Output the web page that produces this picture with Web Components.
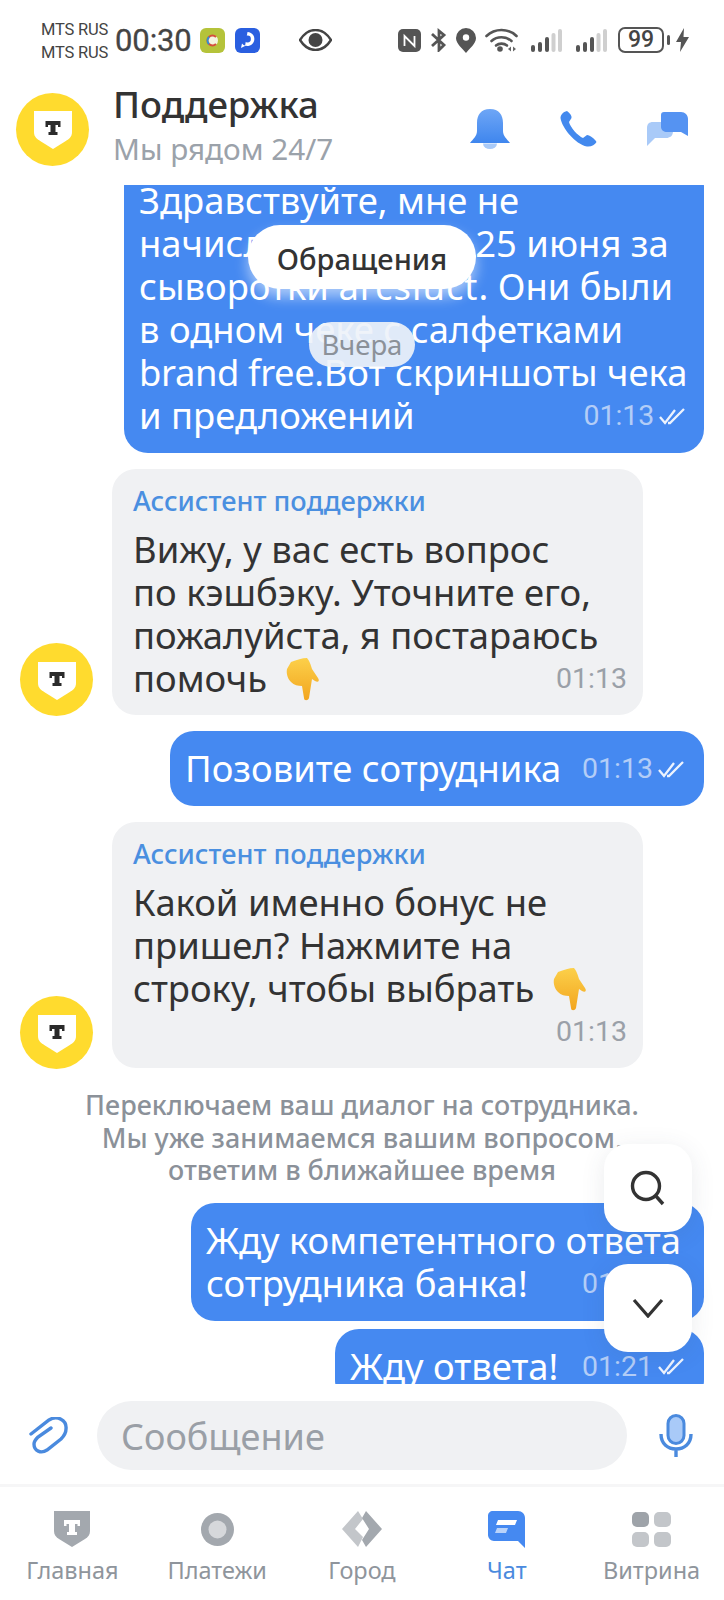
<!DOCTYPE html>
<html lang="ru">
<head>
<meta charset="utf-8">
<title>Поддержка</title>
<style>
  html, body { margin: 0; background: #fff; }
  body { font-family: "Noto Sans", Roboto, sans-serif; color: #333; }
</style>
</head>
<body>
<chat-screen>
  <status-bar slot="status"></status-bar>
  <chat-header slot="header"></chat-header>

  <chat-bubble out style="width:580px;margin-top:-22px" time="01:13">Здравствуйте, мне не<br>начисл<span style="letter-spacing:-.4px">или кэшбэк</span> 25 июня за<br>сыворотки <span style="letter-spacing:1px">arcsluct</span>. Они были<br>в одном чеке с салфетками<br><span style="letter-spacing:-.4px">brand free.</span>Вот скриншоты чека<br>и предложений</chat-bubble>

  <chat-bubble style="width:531px;margin-top:16px" time="01:13" sender="Ассистент поддержки" avatar>Вижу, у вас есть вопрос<br>по кэшбэку. Уточните его,<br>пожалуйста, я постараюсь<br>помочь <hand-emoji></hand-emoji></chat-bubble>

  <chat-bubble out style="width:534px;margin-top:16px" time="01:13">Позовите сотрудника</chat-bubble>

  <chat-bubble style="width:531px;margin-top:16px" time="01:13" sender="Ассистент поддержки" avatar>Какой именно бонус не<br>пришел? Нажмите на<br>строку, чтобы выбрать <hand-emoji></hand-emoji><br>&nbsp;</chat-bubble>

  <system-note>Переключаем ваш диалог на сотрудника.<br>Мы уже занимаемся вашим вопросом,<br>ответим в ближайшее время</system-note>

  <chat-bubble out style="width:513px" time="01:21">Жду компетентного ответа<br>сотрудника банка!</chat-bubble>
  <chat-bubble out style="width:369px;margin-top:8px" time="01:21">Жду ответа!</chat-bubble>

  <chat-overlays slot="over"></chat-overlays>
  <composer-bar slot="composer"></composer-bar>
  <tab-bar slot="tabs"></tab-bar>
</chat-screen>

<script>
class ChatScreen extends HTMLElement {
  constructor() {
    super();
    this.attachShadow({ mode: "open" }).innerHTML = `
      <style>
        :host { display: flex; flex-direction: column; width: 724px; height: 1600px; overflow: hidden; background: #fff; }
        .viewport { position: relative; height: 1199px; flex: none; }
        .scroll { height: 100%; overflow: hidden; display: flex; flex-direction: column; align-items: flex-end; padding-right: 20px; box-sizing: border-box; }
      </style>
      <slot name="status"></slot>
      <slot name="header"></slot>
      <div class="viewport">
        <div class="scroll"><slot></slot></div>
        <slot name="over"></slot>
      </div>
      <slot name="composer"></slot>
      <slot name="tabs"></slot>`;
  }
}

class StatusBar extends HTMLElement {
  constructor() {
    super();
    const bars = `<svg width="31" height="23" viewBox="0 0 31 23">
      <rect x="0" y="16" width="4" height="7" rx="2" fill="#555"/><rect x="7" y="13" width="4" height="10" rx="2" fill="#555"/>
      <rect x="14" y="8" width="4" height="15" rx="2" fill="#555"/><rect x="20.500" y="4" width="4" height="19" rx="2" fill="#cfcfcf"/>
      <rect x="27" y="0" width="4" height="23" rx="2" fill="#cfcfcf"/></svg>`;
    this.attachShadow({ mode: "open" }).innerHTML = `
      <style>
        :host { display: flex; align-items: center; height: 80px; box-sizing: border-box; padding: 0 0 0 41px; color: #444; flex: none; font-family: Roboto, sans-serif; }
        .sim { width: 74px; font-size: 16.500px; line-height: 23px; white-space: nowrap; margin-top: 1px; letter-spacing: -.2px; }
        .clock { width: 85px; font-size: 31px; letter-spacing: -.1px; margin-top: 1px; -webkit-text-stroke: .3px #444; }
        svg { display: block; flex: none; }
        .app { width: 25px; height: 25px; border-radius: 6px; display: grid; place-items: center; margin-right: 10px; }
        .app.lime { background: #b5c33a; }
        .app.blue { background: #2a5fe0; }
        .batt { width: 46px; height: 26px; box-sizing: border-box; border: 2px solid #555; border-radius: 7px; font-size: 23px; font-weight: 500; text-align: center; line-height: 22px; flex: none; }
      </style>
      <div class="sim">MTS RUS<br>MTS RUS</div>
      <div class="clock">00:30</div>
      <div class="app lime"><svg width="15" height="15" viewBox="0 0 15 15"><circle cx="7.500" cy="7.500" r="5.500" fill="#f4f5e0"/><path d="M11 4 A5 5 0 1 0 11 11" fill="none" stroke="#d5503c" stroke-width="2"/><path d="M4 4 A5 5 0 0 0 4 11" fill="none" stroke="#2f8fd8" stroke-width="2"/></svg></div>
      <div class="app blue"><svg width="17" height="18" viewBox="0 0 17 18"><path d="M8.500 1 A7 7 0 1 1 3 12.500 L2 17 L6 15" fill="#fff"/><circle cx="8.500" cy="8" r="3.400" fill="#2a5fe0"/></svg></div>
      <svg style="margin-left:29px" width="33" height="22" viewBox="0 0 33 22"><path d="M1 11 C6 3 11 1 16.500 1 C22 1 27 3 32 11 C27 19 22 21 16.500 21 C11 21 6 19 1 11Z" fill="none" stroke="#444" stroke-width="2.400"/><circle cx="16.500" cy="11" r="7" fill="#444"/></svg>
      <svg style="margin-left:66px" width="23" height="23" viewBox="0 0 23 23"><rect width="23" height="23" rx="5" fill="#555"/><path d="M6.500 17 V7 L16.500 17 V7" fill="none" stroke="#fff" stroke-width="1.800"/></svg>
      <svg style="margin-left:9px" width="17" height="24" viewBox="0 0 17 24"><path d="M2 6 L14 17 L9 22 V3 L14 7 L2 18" fill="none" stroke="#555" stroke-width="2.800"/></svg>
      <svg style="margin-left:9px" width="20" height="25" viewBox="0 0 20 25"><path d="M10 0 A10 10 0 0 1 20 10 C20 16 13 21 10 25 C7 21 0 16 0 10 A10 10 0 0 1 10 0Z" fill="#555"/><circle cx="10" cy="9.500" r="3.200" fill="#fff"/></svg>
      <svg style="margin-left:9px" width="33" height="24" viewBox="0 0 33 24"><g fill="none" stroke="#555" stroke-width="2.600" stroke-linecap="round"><path d="M1.500 8 C10 0 23 0 31.500 8"/><path d="M6.500 13 C12 8 21 8 26.500 13"/><path d="M11 17.500 C14 15 19 15 22 17.500"/></g><circle cx="15" cy="21" r="2.800" fill="#555"/><path d="M23 21 L26 18.500 V23.500Z M28 18.500 L31 21 L28 23.500Z" fill="#666"/></svg>
      <span style="margin-left:13px;display:block">${bars}</span>
      <span style="margin-left:14px;display:block">${bars}</span>
      <div class="batt" style="margin-left:11px">99</div>
      <svg style="margin-left:3px" width="3" height="10" viewBox="0 0 3 10"><rect width="3" height="10" rx="1.500" fill="#555"/></svg>
      <svg style="margin-left:6px" width="13" height="24" viewBox="0 0 13 24"><path d="M8 0 L0 14 H5 L4 24 L13 9 H7.500Z" fill="#555"/></svg>`;
  }
}

class BrandAvatar extends HTMLElement {
  constructor() {
    super();
    this.attachShadow({ mode: "open" }).innerHTML = `
      <style>
        :host { display: grid; place-items: center; width: 73px; height: 73px; border-radius: 50%; background: #ffdb2e; flex: none; }
        svg { display: block; margin-top: 2px; }
      </style>
      <svg width="38" height="38" viewBox="0 0 38 38">
        <path d="M0 0 H38 V21 C38 26 35 28 31 30.500 L19 38 L7 30.500 C3 28 0 26 0 21Z" fill="#fff"/>
        <path d="M11.500 10 H26.500 V16 H24 V14 H21.500 V21 H23.500 V24 H14.500 V21 H16.500 V14 H14 V16 H11.500Z" fill="#2b2b2b"/>
      </svg>`;
  }
}

class ChatHeader extends HTMLElement {
  constructor() {
    super();
    this.attachShadow({ mode: "open" }).innerHTML = `
      <style>
        :host { display: flex; align-items: center; height: 105px; box-sizing: border-box; padding: 0 36px 7px 16px; flex: none; }
        .who { margin: 0 0 9px 24px; flex: 1; }
        .title { font-size: 36.500px; line-height: 42px; font-weight: 500; color: #333; }
        .sub { font-size: 29.700px; line-height: 36px; color: #9ba2aa; margin-top: 6px; }
        svg { display: block; flex: none; }
        .acts { display: flex; align-items: center; }
      </style>
      <brand-avatar></brand-avatar>
      <div class="who"><div class="title">Поддержка</div><div class="sub">Мы рядом 24/7</div></div>
      <div class="acts">
        <svg width="40" height="40" viewBox="0 0 40 40">
          <defs><linearGradient id="b" x1="0" y1="0" x2="0" y2="1"><stop offset="0" stop-color="#6ea6f6"/><stop offset="1" stop-color="#3f86ee"/></linearGradient></defs>
          <path d="M20 0 C29 0 33 6 33 14 V22 C33 27 37 30 40 34 H0 C3 30 7 27 7 22 V14 C7 6 11 0 20 0Z" fill="url(#b)"/>
          <path d="M13 34.500 H27 A7 5.500 0 0 1 13 34.500Z" fill="#a9caf8"/>
        </svg>
        <svg style="margin-left:50px" width="37" height="36" viewBox="0 0 37 36">
          <path d="M7 0 C10 2 12 5 11.500 7 L9 11 C10 16 18 25 23 27 L27 24 C30 24 35 28 36.500 31 C35 34 31 36 27 35.500 C15 33 2 17 0.500 7 C0.500 4 3 1 7 0Z" fill="#4389ee"/>
        </svg>
        <svg style="margin-left:50px" width="41" height="34" viewBox="0 0 41 34">
          <path d="M6 10 H20 C24 10 26 12 26 15 V19 C26 24 23 26 19 26 H8 L0 34 V16 C0 12 2 10 6 10Z" fill="#a9caf8"/>
          <path d="M17 0 H34 C38 0 41 3 41 7 V24 L34 20 H20 C17 20 14 18 14 15 V3 C14 1 15 0 17 0Z" fill="#5593f2"/>
        </svg>
      </div>`;
  }
}

class HandEmoji extends HTMLElement {
  constructor() {
    super();
    this.attachShadow({ mode: "open" }).innerHTML = `
      <style>
        :host { display: inline-block; width: 34px; height: 20px; margin-left: 9px; vertical-align: -3px; position: relative; }
        svg { display: block; position: absolute; left: 0; top: -17px; }
      </style>
      <svg width="34" height="43" viewBox="0 0 34 43">
        <defs><linearGradient id="h" x1="0" y1="0" x2="0" y2="1"><stop offset="0" stop-color="#fcd04a"/><stop offset="1" stop-color="#f2a51f"/></linearGradient></defs>
        <path d="M5 4 C11 2 16 0 21 0 C23 2 25 7 26 11 L32 20 C34 23 32 25 29 23 L26 21 L23 40 C22 43 18 43 18 40 L16 28 C12 28 8 27 5 24 C2 21 0 16 1 11Z" fill="url(#h)"/>
      </svg>`;
  }
}

class ChatBubble extends HTMLElement {
  constructor() {
    super();
    const isOut = this.hasAttribute("out");
    const sender = this.getAttribute("sender");
    const ticks = isOut ? `<svg width="28" height="18" viewBox="0 0 28 18"><path d="M1 10 L6 16 L16 3 M9 16 L11 16 L25 2" fill="none" stroke="#fff" stroke-opacity=".9" stroke-width="2.300"/></svg>` : "";
    this.attachShadow({ mode: "open" }).innerHTML = `
      <style>
        :host { display: block; position: relative; box-sizing: border-box; flex: none; font-size: 36.400px; line-height: 43px; white-space: nowrap; }
        :host(:not([out])) { align-self: flex-start; margin-left: 112px; }
        .box { box-sizing: border-box; width: 100%; border-radius: 24px; }
        :host([out]) .box { background: #4589f1; color: #fff; padding: 16px 18px 16px 15px; }
        :host(:not([out])) .box { background: #f0f1f3; color: #333; padding: 16px 16px 15px 21px; }
        .sender { font-size: 27.200px; line-height: 32px; font-weight: 500; color: #4a8fe0; margin-bottom: 11px; }
        .body { display: grid; }
        .text, .meta { grid-area: 1 / 1; }
        .meta { align-self: end; justify-self: end; display: flex; align-items: center; gap: 5px; font-size: 28.500px; font-family: Roboto, sans-serif; }
        :host([out]) .meta { color: #b3cdf7; }
        :host(:not([out])) .meta { color: #9aa0a8; }
        .ava { position: absolute; left: -92px; bottom: -1px; }
      </style>
      ${this.hasAttribute("avatar") ? `<brand-avatar class="ava"></brand-avatar>` : ""}
      <div class="box">
        ${sender ? `<div class="sender">${sender}</div>` : ""}
        <div class="body">
          <div class="text"><slot></slot></div>
          <div class="meta"><span>${this.getAttribute("time")}</span>${ticks}</div>
        </div>
      </div>`;
  }
}

class SystemNote extends HTMLElement {
  constructor() {
    super();
    this.attachShadow({ mode: "open" }).innerHTML = `
      <style>
        :host { display: block; box-sizing: border-box; width: 704px; margin: 21px 0 16px; text-align: center; font-size: 26.900px; line-height: 32.500px; font-weight: 500; color: #8b9199; flex: none; }
        div { margin-left: 20px; }
      </style>
      <div><slot></slot></div>`;
  }
}

class FloatButton extends HTMLElement {
  constructor() {
    super();
    this.attachShadow({ mode: "open" }).innerHTML = `
      <style>
        :host { display: grid; place-items: center; width: 88px; height: 88px; border-radius: 24px; background: #fff; box-shadow: 0 4px 24px rgba(60,70,90,.10); }
      </style>
      <slot></slot>`;
  }
}

class ChatOverlays extends HTMLElement {
  constructor() {
    super();
    this.attachShadow({ mode: "open" }).innerHTML = `
      <style>
        :host { display: block; }
        .pill { position: absolute; left: 50%; transform: translateX(-50%); display: grid; place-items: center; border-radius: 32px; white-space: nowrap; }
        .topic { top: 40px; left: 362px; width: 228px; height: 64px; box-sizing: border-box; padding-top: 3px; background: #fff; color: #333; font-size: 29px; font-weight: 500; box-shadow: 0 8px 14px rgba(255,255,255,.55); }
        .date { top: 137px; left: 362px; width: 106px; height: 45px; background: rgba(238,242,248,.92); color: #8b9199; font-size: 27.500px; }
        .fabs { position: absolute; right: 32px; }
        svg { display: block; }
      </style>
      <div class="pill topic">Обращения</div>
      <div class="pill date">Вчера</div>
      <float-button class="fabs" style="top:959px">
        <svg width="36" height="36" viewBox="0 0 36 36"><circle cx="16" cy="16" r="13.500" fill="none" stroke="#333" stroke-width="3.400"/><path d="M25 25 L33 34" stroke="#333" stroke-width="3.400" fill="none"/></svg>
      </float-button>
      <float-button class="fabs" style="top:1079px">
        <svg width="32" height="20" viewBox="0 0 32 20"><path d="M2 2 L16 18 L30 2" fill="none" stroke="#333" stroke-width="3.200"/></svg>
      </float-button>`;
  }
}

class ComposerBar extends HTMLElement {
  constructor() {
    super();
    this.attachShadow({ mode: "open" }).innerHTML = `
      <style>
        :host { display: flex; align-items: center; height: 103px; box-sizing: border-box; padding: 17px 29px 14px 29px; border-bottom: 3px solid #f6f6f7; flex: none; }
        .field { width: 530px; height: 69px; margin-left: 29px; border-radius: 35px; background: #f0f1f3; color: #9a9fa6; font-size: 36px; line-height: 72px; padding-left: 24px; box-sizing: border-box; }
        svg { display: block; flex: none; }
      </style>
      <svg width="39" height="37" viewBox="0 0 39 37"><path d="M2 17 L20 3 C28 -2 38 3 37 12 C37 16 35 19 32 22 L18 33 C12 37 5 34 5 27 C5 24 7 22 9 20 L22 11" fill="none" stroke="#4a8ade" stroke-width="3.400" stroke-linecap="round"/></svg>
      <div class="field">Сообщение</div>
      <svg style="margin-left:32px" width="34" height="44" viewBox="0 0 34 44"><rect x="9" y="1.500" width="16" height="28" rx="8" fill="#a9caf8" stroke="#4a8ade" stroke-width="3"/><path d="M2 20 C2 30 9 35 17 35 C25 35 32 30 32 20 M17 35 V43" fill="none" stroke="#4a8ade" stroke-width="3.400"/></svg>`;
  }
}

class TabItem extends HTMLElement {
  constructor() {
    super();
    this.attachShadow({ mode: "open" }).innerHTML = `
      <style>
        :host { display: flex; flex-direction: column; align-items: center; font-size: 23.500px; line-height: 30px; color: #8f959c; white-space: nowrap; }
        :host([active]) { color: #4a8ade; }
        .icon { height: 40px; display: flex; align-items: center; justify-content: center; margin-bottom: 6px; }
      </style>
      <div class="icon"><slot name="icon"></slot></div>
      <slot></slot>`;
  }
}

class TabBar extends HTMLElement {
  constructor() {
    super();
    this.attachShadow({ mode: "open" }).innerHTML = `
      <style>
        :host { display: grid; grid-template-columns: repeat(5, 1fr); box-sizing: border-box; padding-top: 22px; flex: none; }
      </style>
      <tab-item>
        <svg slot="icon" width="36" height="36" viewBox="0 0 36 36"><path d="M0 0 H36 V20 C36 24 34 26 31 28 L18 36 L5 28 C2 26 0 24 0 20Z" fill="#a3a8ae"/><path d="M10 9 H26 V15 H23.500 V13 H21 V21 H23 V24 H13 V21 H15 V13 H12.500 V15 H10Z" fill="#fff"/></svg>
        Главная
      </tab-item>
      <tab-item>
        <svg slot="icon" width="33" height="33" viewBox="0 0 33 33"><circle cx="16.500" cy="16.500" r="16.500" fill="#a3a8ae"/><circle cx="16.500" cy="16.500" r="9" fill="#d6d8db"/></svg>
        Платежи
      </tab-item>
      <tab-item>
        <svg slot="icon" width="40" height="36" viewBox="0 0 40 36"><path d="M16 0 L0 18 L16 36 L21 26 L13 18 L21 8Z" fill="#c3c6ca"/><path d="M24 0 L40 18 L24 36 L20 29 L27 18 L20 7Z" fill="#a3a8ae"/></svg>
        Город
      </tab-item>
      <tab-item active>
        <svg slot="icon" width="37" height="37" viewBox="0 0 37 37"><path d="M5 0 H30 C34 0 37 3 37 7 V37 L30 30 H6 C3 30 0 27 0 24 V5 C0 2 2 0 5 0Z" fill="#4589f1"/><path d="M10 9 H29 L27 14 H8Z" fill="#fff"/><path d="M9 17 H20 L18 22 H7Z" fill="#b9d3fa"/></svg>
        Чат
      </tab-item>
      <tab-item>
        <svg slot="icon" width="39" height="35" viewBox="0 0 39 35"><rect x="0" y="0" width="17" height="15" rx="5" fill="#9ea3a9"/><rect x="22" y="0" width="17" height="15" rx="5" fill="#c3c6ca"/><rect x="0" y="20" width="17" height="15" rx="5" fill="#c3c6ca"/><rect x="22" y="20" width="17" height="15" rx="5" fill="#c3c6ca"/></svg>
        Витрина
      </tab-item>`;
  }
}

customElements.define("chat-screen", ChatScreen);
customElements.define("status-bar", StatusBar);
customElements.define("brand-avatar", BrandAvatar);
customElements.define("chat-header", ChatHeader);
customElements.define("hand-emoji", HandEmoji);
customElements.define("chat-bubble", ChatBubble);
customElements.define("system-note", SystemNote);
customElements.define("float-button", FloatButton);
customElements.define("chat-overlays", ChatOverlays);
customElements.define("composer-bar", ComposerBar);
customElements.define("tab-item", TabItem);
customElements.define("tab-bar", TabBar);
</script>
</body>
</html>
